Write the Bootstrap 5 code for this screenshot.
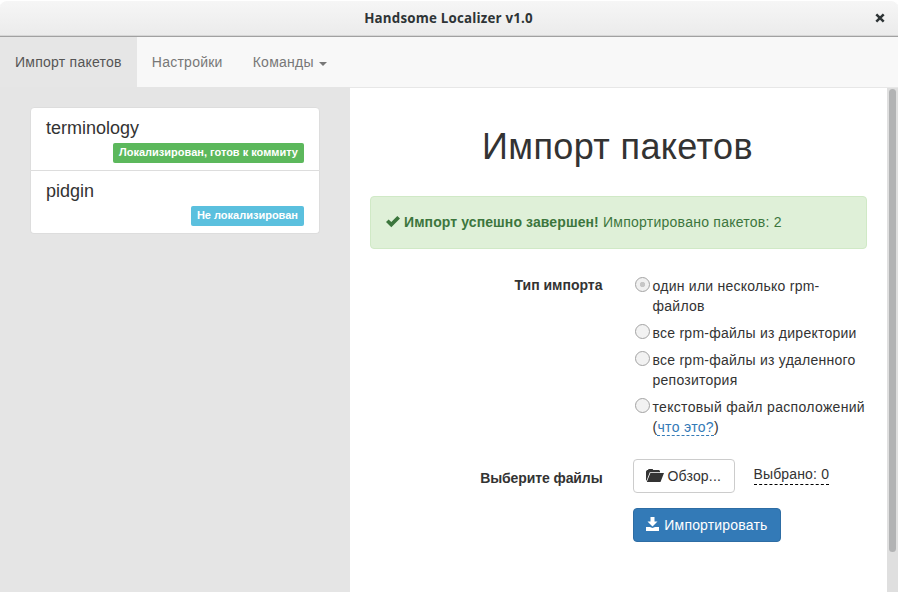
<!DOCTYPE html>
<html lang="ru">
<head>
<meta charset="utf-8">
<title>Handsome Localizer v1.0</title>
<meta name="viewport" content="width=device-width, initial-scale=1">
<link href="https://cdn.jsdelivr.net/npm/bootstrap@5.3.0/dist/css/bootstrap.min.css" rel="stylesheet">
<style>
body{font:14px/20px "Liberation Sans",Arial,sans-serif;color:#333;background:#fff;height:100vh;overflow:hidden;letter-spacing:.25px}
b{letter-spacing:.1px}
.titlebar{height:37px;background:linear-gradient(#f6f6f6,#ebebeb);border-top:1px solid #fff;border-bottom:1px solid #a1a1a1;box-shadow:inset 0 -1px #d6d6d6;border-radius:7px 7px 0 0;font:bold 13.33px/34px "Open Sans","Noto Sans",sans-serif;letter-spacing:.2px;padding-right:1px;color:#2e3436;position:relative}
.win-close{position:absolute;right:13px;top:12px;width:10px;height:10px}
.topnav{height:50px;background:#f8f8f8;padding:0}
.topnav .navbar-nav .nav-link{padding:15px;color:#777;line-height:20px}
.topnav .navbar-nav .nav-link.active{background:#e6e6e6;color:#555;height:50px}
.topnav .dropdown-toggle::after{border-top:4px solid;border-right:4px solid transparent;border-left:4px solid transparent;margin-left:5px;vertical-align:1px}
.side{width:350px;background:#e5e5e5;padding:20px 30px}
.side .list-group-item{padding:10px 15px 7px;height:63px;border-color:#ddd;color:#333}
.side .list-group{--bs-list-group-border-radius:4px}
.side .list-group-item:first-child{height:64px}
.pkg{font-size:18px;line-height:20px;letter-spacing:0;margin:0}
.tag{font-size:11px;line-height:11px;padding:4px 6px 5px;height:20px;border-radius:2px;letter-spacing:0;margin-top:5px}
.tag-ok{background:#5cb85c}.tag-info{background:#5bc0de}
.main{border-top:1px solid #e7e7e7;padding:39px 20px 0;min-width:0}
h1{font-size:36px;line-height:40px;font-weight:400;margin:0 1px 29px -1px;letter-spacing:.37px}
.alert{background:#dff0d8;border-color:#d0e9c6;color:#3c763d;padding:15px;height:53px;border-radius:4px;margin-bottom:20px}
.check-ico{vertical-align:-1px}
.import-form{margin-left:-2px}
.form-row{--bs-gutter-x:30px}
.ctl-label{font-weight:700;text-align:right;padding-top:6px;letter-spacing:0}
.pick-row{margin-top:22px}
.pick-row .ctl-label{padding-top:9px;letter-spacing:-.1px}
.import-row{margin-top:15px}
.opt{display:flex;margin:7px -4px 0 0}
.opt .form-check-input{width:15px;height:15px;margin:1px 3px 0 2px;flex:none;border:1px solid #a3a3a3;background:#f2f2f2;box-shadow:none}
.opt .form-check-input:checked{background:radial-gradient(circle,#c6c6c6 2.3px,#f0f0f0 3px)}
.wide-opt{letter-spacing:.32px}
.what{display:inline-block;line-height:16px;color:#337ab7;border-bottom:1px dashed #337ab7;text-decoration:none}
.btn{font-size:14px;line-height:20px;padding:6px 12px;height:34px;border-radius:4px;letter-spacing:.18px;display:inline-flex;align-items:center;white-space:nowrap}
.btn svg{margin-bottom:2px}
.btn-browse{width:102px;border-color:#ccc;color:#333;background:#fff}
.btn-import{width:148px;background:#337ab7;border-color:#2e6da4;color:#fff}
.picked{border-bottom:1px dashed #000;line-height:18px;height:20px;margin:6px 0 0 19px;letter-spacing:.15px}
.scroller{width:11px;background:#dfdfdf;border-top:1px solid #e7e7e7;padding:1px 2px}
.thumb{height:463px;background:#b2b3b4;border-radius:4px}
</style>
</head>
<body class="d-flex flex-column">
<header class="titlebar text-center flex-shrink-0">Handsome Localizer v1.0
<svg class="win-close" viewBox="0 0 10 10"><path d="M1.300 1.300l7.400 7.400M8.700 1.300l-7.400 7.400" stroke="#2e3436" stroke-width="2.500"/></svg></header>
<nav class="topnav navbar navbar-expand flex-shrink-0 align-items-start">
<ul class="navbar-nav">
<li class="nav-item"><a class="nav-link active" href="#">Импорт пакетов</a></li>
<li class="nav-item"><a class="nav-link" href="#">Настройки</a></li>
<li class="nav-item dropdown"><a class="nav-link dropdown-toggle" href="#" data-bs-toggle="dropdown">Команды</a></li>
</ul>
</nav>
<div class="d-flex flex-grow-1">
<aside class="side flex-shrink-0">
<div class="list-group">
<div class="list-group-item d-flex flex-column"><h4 class="pkg">terminology</h4><span class="badge tag tag-ok align-self-end">Локализирован, готов к коммиту</span></div>
<div class="list-group-item d-flex flex-column"><h4 class="pkg">pidgin</h4><span class="badge tag tag-info align-self-end">Не локализирован</span></div>
</div>
</aside>
<main class="main flex-grow-1">
<h1 class="text-center">Импорт пакетов</h1>
<div class="alert"><svg width="14" height="12" viewBox="0 0 14 12" class="me-1 check-ico"><path d="M0 6l2.600-2.600L5.300 6 11.300 0 14 2.500 5.300 11.200z" fill="#3c763d"/></svg><b>Импорт успешно завершен!</b> Импортировано пакетов: 2</div>
<form class="import-form">
<div class="row form-row">
<div class="col-6 ctl-label">Тип импорта</div>
<div class="col-6">
<label class="opt"><input class="form-check-input" type="radio" name="t" checked><span>один или несколько rpm-файлов</span></label>
<label class="opt"><input class="form-check-input" type="radio" name="t"><span>все rpm-файлы из директории</span></label>
<label class="opt"><input class="form-check-input" type="radio" name="t"><span>все rpm-файлы из удаленного репозитория</span></label>
<label class="opt wide-opt"><input class="form-check-input" type="radio" name="t"><span>текстовый файл расположений (<a class="what" href="#">что это?</a>)</span></label>
</div>
</div>
<div class="row form-row pick-row">
<div class="col-6 ctl-label">Выберите файлы</div>
<div class="col-6 d-flex align-items-start">
<button type="button" class="btn btn-browse"><svg width="18" height="13" viewBox="0 0 18 13" class="me-1 flex-shrink-0"><path d="M0 11.500V2.500L1 1h1L2.600 0h4l.6 1H13l1 1v1.200H3.800L.6 11.500z M.8 13L4.400 4H18L14.500 13z" fill="#333"/></svg>Обзор...</button>
<span class="picked">Выбрано: 0</span>
</div>
</div>
<div class="row form-row import-row"><div class="col-6 offset-6"><button type="button" class="btn btn-import"><svg width="13" height="14" viewBox="0 0 13 14" class="flex-shrink-0 me-1"><path d="M4.500 0h4v4.500h3L6.500 9.500 1.500 4.500h3z M0 10h4l2.500 1L9 10h4v4H0z" fill="#fff"/></svg><span class="ms-auto">Импортировать</span></button></div></div>
</form>
</main>
<div class="scroller flex-shrink-0"><div class="thumb"></div></div>
</div>
<script src="https://cdn.jsdelivr.net/npm/bootstrap@5.3.0/dist/js/bootstrap.bundle.min.js"></script>
</body>
</html>
